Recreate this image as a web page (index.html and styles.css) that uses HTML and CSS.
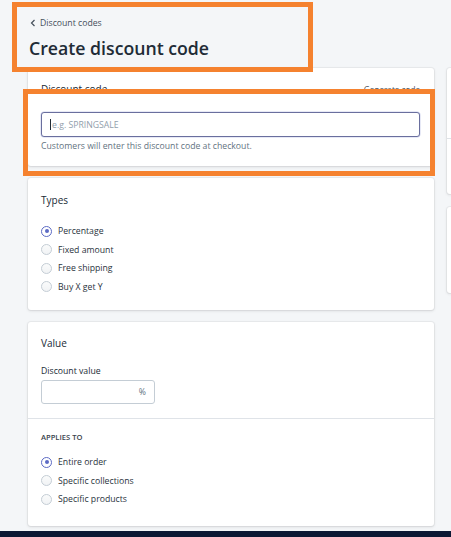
FILE: index.html
```html
<!DOCTYPE html>
<html>
<head>
<meta charset="utf-8">
<link rel="stylesheet" href="styles.css">
</head>
<body>
<div class="page">
  <header class="page-header">
    <a class="breadcrumb" href="#"><svg class="chev" viewBox="0 0 8 10" width="6" height="8"><path d="M6 1 L2 5 L6 9" fill="none" stroke="#454f5b" stroke-width="1.6"/></svg><span>Discount codes</span></a>
    <h1 class="title">Create discount code</h1>
  </header>
  <div class="layout">
    <main class="primary">
      <section class="card card-code">
        <div class="card-head">
          <h2 class="card-title">Discount code</h2>
          <a class="link" href="#">Generate code</a>
        </div>
        <div class="field">
          <div class="input input-focus"><span class="caret"></span><span class="placeholder">e.g. SPRINGSALE</span></div>
          <p class="help">Customers will enter this discount code at checkout.</p>
        </div>
      </section>

      <section class="card card-types">
        <h2 class="card-title">Types</h2>
        <ul class="radios">
          <li><span class="radio on"></span>Percentage</li>
          <li><span class="radio"></span>Fixed amount</li>
          <li><span class="radio"></span>Free shipping</li>
          <li><span class="radio"></span>Buy X get Y</li>
        </ul>
      </section>

      <section class="card card-value">
        <div class="section">
          <h2 class="card-title">Value</h2>
          <label class="label">Discount value</label>
          <div class="input input-small"><span class="suffix">%</span></div>
        </div>
        <div class="section section-applies">
          <h3 class="caption">APPLIES TO</h3>
          <ul class="radios radios-applies">
            <li><span class="radio on"></span>Entire order</li>
            <li><span class="radio"></span>Specific collections</li>
            <li><span class="radio"></span>Specific products</li>
          </ul>
        </div>
      </section>
    </main>
    <aside class="secondary">
      <div class="card side-card side-a">
        <div class="side-sec"></div>
      </div>
      <div class="card side-card side-b"></div>
    </aside>
  </div>
  <div class="taskbar"></div>
</div>
<div class="annot annot-1"></div>
<div class="annot annot-2"></div>
</body>
</html>
```

FILE: styles.css
```css
* { box-sizing: border-box; }
html, body { margin: 0; padding: 0; overflow: hidden; }
body {
  background: #f4f6f8;
  font-family: "Open Sans", "Noto Sans", sans-serif;
  color: #212b36;
  width: 451px;
  height: 537px;
  position: relative;
}
.page { padding-top: 16px; }
.page-header { padding-left: 29px; }
.breadcrumb {
  display: flex;
  align-items: center;
  gap: 4px;
  color: #454f5b;
  text-decoration: none;
  font-size: 8.7px;
  line-height: 14px;
  margin-left: 1px;
}
.chev { display: block; }
.title {
  margin: 7px 0 0 0;
  font-size: 17.7px;
  font-weight: 600;
  line-height: 22px;
  color: #212b36;
}
.layout {
  display: flex;
  gap: 13px;
  padding-left: 28px;
  margin-top: 9px;
}
.primary {
  flex: 0 0 406px;
  display: flex;
  flex-direction: column;
  gap: 12px;
}
.secondary {
  flex: 1 1 auto;
  min-width: 0;
  display: flex;
  flex-direction: column;
  gap: 13px;
}
.card {
  background: #fff;
  border-radius: 3px;
  box-shadow: 0 0 0 1px rgba(63,63,68,.05), 0 1px 3px 0 rgba(63,63,68,.15);
}
.side-card { border-radius: 3px 0 0 3px; }
.card-title {
  margin: 0;
  font-size: 10px;
  font-weight: 400;
  line-height: 14px;
  color: #212b36;
}
.card-code { padding: 14px 14px 14px 13px; }
.card-head {
  display: flex;
  justify-content: space-between;
  align-items: center;
}
.link {
  font-size: 8.2px;
  color: #454f5b;
  text-decoration: none;
}
.field { margin-top: 16px; }
.input {
  height: 25px;
  border: 1px solid #c4cdd5;
  border-radius: 3px;
  background: #fff;
  display: flex;
  align-items: center;
  padding: 0 8px;
}
.input-focus { border-color: #6a6f9e; box-shadow: 0 0 0 0.5px rgba(92,106,196,.3); }
.caret { width: 1px; height: 11px; background: #212b36; margin-right: 1px; }
.placeholder { font-size: 8.7px; color: #919eab; }
.help {
  margin: 3px 0 0 0;
  font-size: 8.7px;
  line-height: 12px;
  color: #637381;
}
.card-types { padding: 15px 14px 14px 13px; }
.radios {
  list-style: none;
  margin: 15px 0 0 0;
  padding: 0;
}
.radios li {
  display: flex;
  align-items: center;
  height: 18.5px;
  font-size: 8.7px;
  color: #2a333d;
}
.radio {
  width: 11px;
  height: 11px;
  border-radius: 50%;
  border: 1px solid #c4cdd5;
  background: linear-gradient(#fafbfb, #f1f3f5);
  margin-right: 6px;
  flex: 0 0 auto;
  position: relative;
}
.radio.on {
  border-color: #5c6ac4;
  background: #fff;
}
.radio.on::after {
  content: "";
  position: absolute;
  left: 2.5px; top: 2.5px;
  width: 4px; height: 4px;
  border-radius: 50%;
  background: #5c6ac4;
}
.card-value { display: flex; flex-direction: column; }
.section { padding: 14px 14px 14px 13px; }
.label {
  display: block;
  margin-top: 15px;
  font-size: 8.7px;
  line-height: 12px;
}
.input-small {
  width: 114px;
  height: 24px;
  margin-top: 3px;
  justify-content: flex-end;
}
.suffix { font-size: 8.7px; color: #637381; }
.section-applies {
  border-top: 1px solid #dfe3e8;
  padding: 12px 14px 17px 13px;
}
.caption {
  margin: 0;
  font-size: 7.6px;
  font-weight: 600;
  line-height: 12px;
  color: #3a434d;
}
.radios-applies { margin-top: 10px; }
.side-a { height: 126px; display: flex; flex-direction: column; }
.side-sec { margin-top: 70px; border-top: 1px solid #dfe3e8; }
.side-b { height: 86px; }
.taskbar {
  position: absolute;
  left: 0; right: 0; bottom: 0;
  height: 6px;
  background: #0c1834;
}
.annot {
  position: absolute;
  border: 5px solid #f5822f;
}
.annot-1 { left: 12px; top: 2px; width: 301px; height: 70px; }
.annot-2 { left: 23px; top: 89px; width: 412px; height: 87px; }
```
